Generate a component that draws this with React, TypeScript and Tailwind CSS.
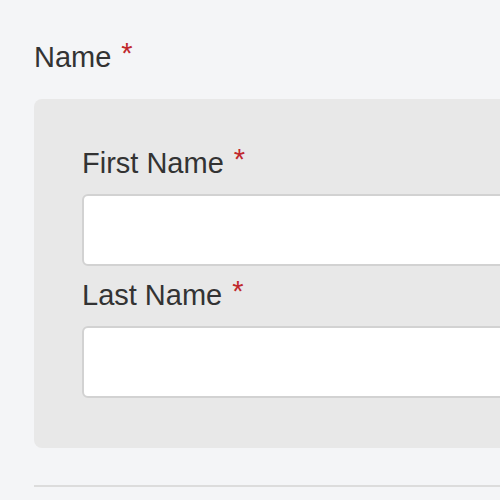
const labelText = "text-[29px] leading-[33px] text-[#333333]";

const Required = () => (
  <span className="ml-[10px] align-[4px] leading-[0] text-[#c0282d]">*</span>
);

const Field = ({ label }: { label: string }) => (
  <div className="flex flex-col gap-[14px]">
    <label className={labelText}>
      {label}
      <Required />
    </label>
    <input className="h-[72px] w-full rounded-md border-2 border-[#d2d2d2] bg-white outline-none" />
  </div>
);

export default function App() {
  return (
    <div className="h-[500px] w-[500px] overflow-hidden bg-[#f4f5f7] font-['Liberation_Sans',Arial,sans-serif]">
      <div className="flex w-[760px] flex-col pl-[34px] pt-[41px]">
        <div className={labelText}>
          Name
          <Required />
        </div>

        {/* Name group */}
        <div className="mt-[25px] flex flex-col gap-[13px] rounded-lg bg-[#e8e8e8] px-12 pb-[50px] pt-12">
          <Field label="First Name" />
          <Field label="Last Name" />
        </div>

        <div className="mt-[37px] h-[2px] bg-[#dcdcdc]" />
      </div>
    </div>
  );
}
